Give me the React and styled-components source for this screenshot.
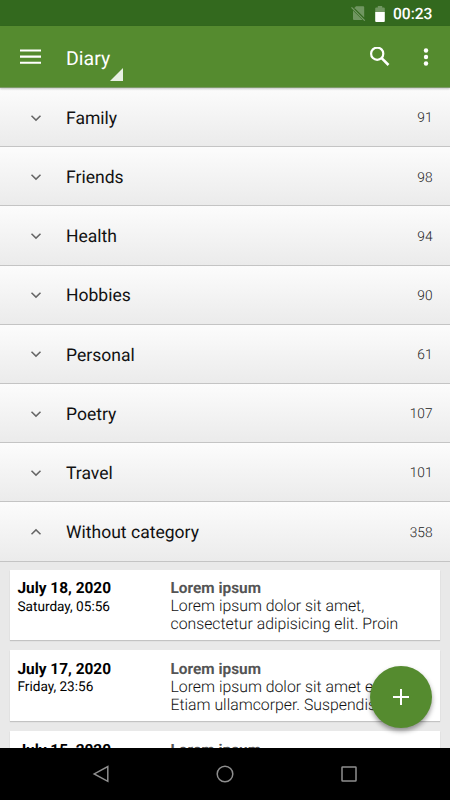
import React from 'react';
import styled, { createGlobalStyle } from 'styled-components';

const GlobalStyle = createGlobalStyle`
	* {
		box-sizing: border-box;
	}

	body {
		margin: 0;
		font-family: Roboto, 'Liberation Sans', sans-serif;
		text-rendering: geometricPrecision;
	}
`;

const Screen = styled.div`
	position: relative;
	display: flex;
	flex-direction: column;
	height: 800px;
	overflow: hidden;
	background: #e9e9e9;
`;

const StatusBar = styled.div`
	display: flex;
	flex: none;
	align-items: center;
	justify-content: flex-end;
	height: 26px;
	padding: 1px 17.5px 0 0;
	background: #33691e;
	color: #fff;
`;

const SimIcon = styled.svg`
	width: 15px;
	height: 15px;
`;

const BatteryIcon = styled.svg`
	width: 10px;
	height: 16px;
	margin-left: 9px;
`;

const Clock = styled.span`
	margin-left: 8px;
	font-size: 15.6px;
	font-weight: 500;
	line-height: 18px;
`;

const Toolbar = styled.header`
	display: flex;
	flex: none;
	align-items: center;
	height: 62px;
	padding: 0 17px 0 20px;
	background: #558b2f;
	border-bottom: 1px solid #7d9a69;
	box-shadow: 0 1px 2px rgba(0, 0, 0, 0.22);
	z-index: 1;
`;

const MenuIcon = styled.svg`
	flex: none;
	width: 21px;
	height: 16px;
`;

const Title = styled.div`
	display: flex;
	flex: 1;
	height: 61px;
	margin-left: 25px;
	color: #fff;
	font-size: 19.5px;
	line-height: 65px;
`;

const Spinner = styled.svg`
	width: 13px;
	height: 13px;
	margin-top: 42px;
`;

const SearchIcon = styled.svg`
	width: 20px;
	height: 20px;
	margin-right: 33px;
`;

const MoreIcon = styled.svg`
	width: 6px;
	height: 20px;
	margin-right: 4px;
`;

const List = styled.main`
	flex: 1;
	min-height: 0;
	overflow: hidden;
`;

const Category = styled.div`
	display: flex;
	align-items: center;
	height: 59.2px;
	padding: 0 17.5px 0 30px;
	background: linear-gradient(#fcfcfc, #ebebeb);
	border-bottom: 1px solid #c4c4c4;
`;

const Chevron = styled.svg`
	width: 12px;
	height: 8px;
	margin-top: 1px;
	transform: ${({ $open }) => ($open ? 'rotate(180deg)' : 'none')};
`;

const CategoryName = styled.span`
	flex: 1;
	margin: 3.5px 0 0 24px;
	color: #111;
	font-size: 17.55px;
	line-height: 22px;
`;

const Count = styled.span`
	margin-top: 2.5px;
	color: #222;
	font-size: 13.7px;
	font-weight: 300;
`;

const Entries = styled.div`
	display: flex;
	flex-direction: column;
	gap: 10px;
	padding: 8px 10px;
`;

const Entry = styled.article`
	display: flex;
	height: 70.8px;
	padding: 9.5px 7.5px 0;
	background: #fff;
	box-shadow: 0 1px 1px rgba(0, 0, 0, 0.16);
`;

const When = styled.div`
	flex: none;
	width: 153px;
	color: #000;
`;

const EntryDate = styled.div`
	font-size: 15.4px;
	font-weight: 700;
	line-height: 18.5px;
`;

const EntryTime = styled.div`
	font-size: 13.6px;
	line-height: 18px;
`;

const Body = styled.div`
	font-size: 15.8px;
	line-height: 18px;
	white-space: nowrap;
`;

const Heading = styled.div`
	color: #555;
	font-size: 15.4px;
	font-weight: 700;
`;

const Line = styled.div`
	color: #111;
	font-weight: 300;
`;

const AddButton = styled.button`
	position: absolute;
	right: 18px;
	bottom: 72px;
	z-index: 2;
	display: flex;
	align-items: center;
	justify-content: center;
	width: 62px;
	height: 62px;
	padding: 0;
	border: 0;
	border-radius: 50%;
	background: #558b2f;
	box-shadow: 0 3px 5px rgba(0, 0, 0, 0.4);
`;

const NavBar = styled.nav`
	display: flex;
	flex: none;
	align-items: center;
	justify-content: center;
	gap: 106px;
	height: 52px;
	background: #000;
`;

const NavIcon = styled.svg`
	width: 18px;
	height: 18px;
	fill: none;
	stroke: #8e8e8e;
	stroke-width: 1.5;
`;

const categories = [
	{ name: 'Family', count: 91 },
	{ name: 'Friends', count: 98 },
	{ name: 'Health', count: 94 },
	{ name: 'Hobbies', count: 90 },
	{ name: 'Personal', count: 61 },
	{ name: 'Poetry', count: 107 },
	{ name: 'Travel', count: 101 },
	{ name: 'Without category', count: 358, open: true },
];

const entries = [
	{
		date: 'July 18, 2020',
		time: 'Saturday, 05:56',
		lines: ['Lorem ipsum dolor sit amet,', 'consectetur adipisicing elit. Proin'],
	},
	{
		date: 'July 17, 2020',
		time: 'Friday, 23:56',
		lines: ['Lorem ipsum dolor sit amet enim.', 'Etiam ullamcorper. Suspendisse'],
	},
	{
		date: 'July 15, 2020',
		time: '',
		lines: [],
	},
];

export default function App() {
	return (
		<Screen>
			<GlobalStyle />
			<StatusBar>
				<SimIcon viewBox="0 0 15 15">
					<path d="M2.6 2.8 5 0.3H12.2Q13.2 0.3 13.2 1.3V11.6L3.8 2.2ZM2 4.4 11.6 14H3Q2 14 2 13Z" fill="#fff" opacity="0.3" />
					<path d="M0.5 1.4 13.8 14.6" stroke="#fff" strokeWidth="1.2" opacity="0.33" />
				</SimIcon>
				<BatteryIcon viewBox="0 0 10 16">
					<path d="M0.2 6V2.6Q0.2 1.6 1.2 1.6H2.8V0H7.2V1.6H8.8Q9.8 1.6 9.8 2.6V6Z" fill="#fff" opacity="0.3" />
					<path d="M0.2 6H9.8V15Q9.8 16 8.8 16H1.2Q0.2 16 0.2 15Z" fill="#fff" />
				</BatteryIcon>
				<Clock>00:23</Clock>
			</StatusBar>
			<Toolbar>
				<MenuIcon viewBox="0 0 21 16">
					<path d="M0 1.5H21M0 7.6H21M0 13.7H21" stroke="#fff" strokeWidth="2.1" />
				</MenuIcon>
				<Title>
					Diary
					<Spinner viewBox="0 0 13 13">
						<path d="M13 0V13H0Z" fill="#e8f0e3" />
					</Spinner>
				</Title>
				<SearchIcon viewBox="0 0 20 20" fill="none" stroke="#fff" strokeWidth="2.2">
					<circle cx="7.2" cy="6.7" r="6.1" />
					<path d="M11.4 10.9 18.5 18" strokeWidth="2.6" />
				</SearchIcon>
				<MoreIcon viewBox="0 0 6 20" fill="#fff">
					<circle cx="3" cy="3.5" r="2.2" />
					<circle cx="3" cy="10" r="2.2" />
					<circle cx="3" cy="16.5" r="2.2" />
				</MoreIcon>
			</Toolbar>
			<List>
				{categories.map(({ name, count, open }) => (
					<Category key={name}>
						<Chevron $open={open} viewBox="0 0 12 8">
							<path d="M1.5 1.7 6 6.1 10.5 1.7" fill="none" stroke="#666" strokeWidth="1.5" />
						</Chevron>
						<CategoryName>{name}</CategoryName>
						<Count>{count}</Count>
					</Category>
				))}
				<Entries>
					{entries.map(({ date, time, lines }) => (
						<Entry key={date}>
							<When>
								<EntryDate>{date}</EntryDate>
								<EntryTime>{time}</EntryTime>
							</When>
							<Body>
								<Heading>Lorem ipsum</Heading>
								{lines.map((line) => (
									<Line key={line}>{line}</Line>
								))}
							</Body>
						</Entry>
					))}
				</Entries>
			</List>
			<AddButton aria-label="Add entry">
				<svg width="16" height="16" viewBox="0 0 16 16">
					<path d="M8 0V16M0 8H16" stroke="#fff" strokeWidth="2" />
				</svg>
			</AddButton>
			<NavBar>
				<NavIcon viewBox="0 0 18 18">
					<path d="M15.8 1.5V16.3L2.2 8.9Z" />
				</NavIcon>
				<NavIcon viewBox="0 0 18 18">
					<circle cx="9" cy="9" r="7.8" />
				</NavIcon>
				<NavIcon viewBox="0 0 18 18">
					<rect x="2" y="2" width="14" height="14" rx="0.6" />
				</NavIcon>
			</NavBar>
		</Screen>
	);
}
